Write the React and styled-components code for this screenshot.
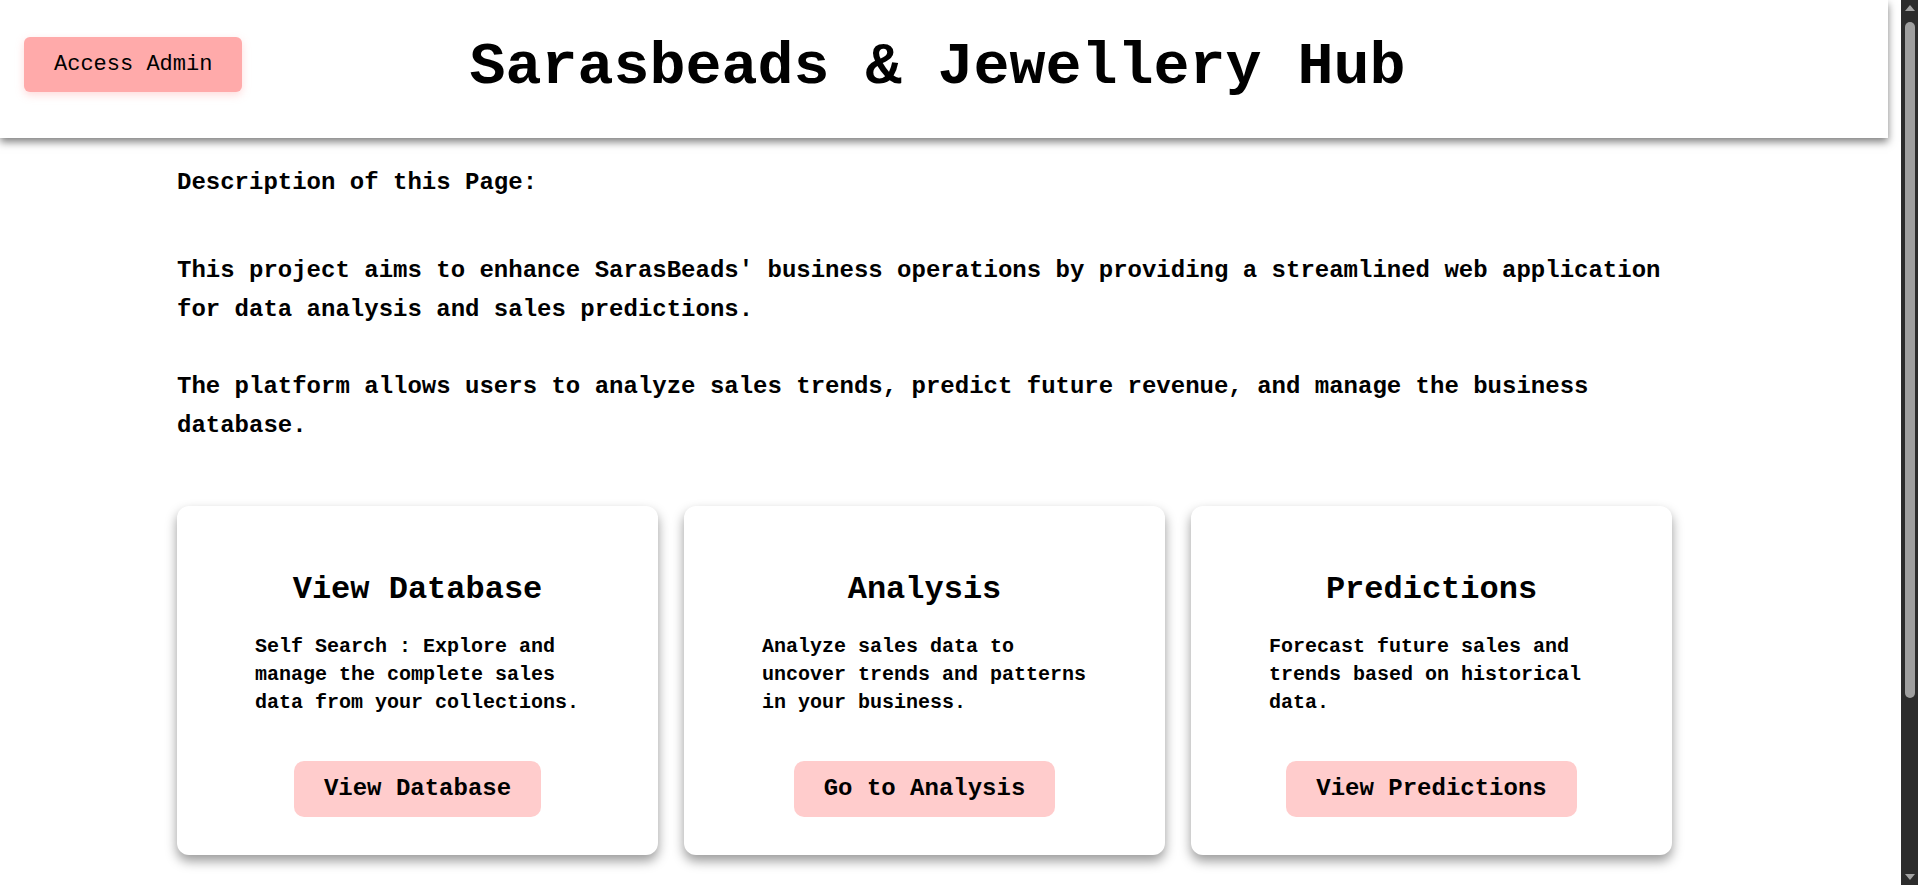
import styled, { createGlobalStyle } from "styled-components";

const GlobalStyle = createGlobalStyle`
  html, body {
    margin: 0;
    padding: 0;
    background: #fff;
  }

  body {
    font-family: "Liberation Mono", "Courier New", monospace;
    color: #000;
  }
`;

const cards = [
  {
    title: "View Database",
    text: "Self Search : Explore and manage the complete sales data from your collections.",
    action: "View Database",
  },
  {
    title: "Analysis",
    text: "Analyze sales data to uncover trends and patterns in your business.",
    action: "Go to Analysis",
  },
  {
    title: "Predictions",
    text: "Forecast future sales and trends based on historical data.",
    action: "View Predictions",
  },
];

function App() {
  return (
    <>
      <GlobalStyle />
      <Header>
        <AdminButton>Access Admin</AdminButton>
        <Title>Sarasbeads &amp; Jewellery Hub</Title>
      </Header>
      <Main>
        <Intro>Description of this Page:</Intro>
        <Paragraph>
          This project aims to enhance SarasBeads' business operations by providing a
          streamlined web application for data analysis and sales predictions.
        </Paragraph>
        <Paragraph>
          The platform allows users to analyze sales trends, predict future revenue, and
          manage the business database.
        </Paragraph>
        <CardGrid>
          {cards.map((card) => (
            <Card key={card.title}>
              <CardTitle>{card.title}</CardTitle>
              <CardText>{card.text}</CardText>
              <CardButton>{card.action}</CardButton>
            </Card>
          ))}
        </CardGrid>
      </Main>
      {/* window scrollbar, drawn since the headless page hides its own */}
      <ScrollTrack>
        <ScrollArrow $up />
        <ScrollThumb />
        <ScrollArrow />
      </ScrollTrack>
    </>
  );
}

const Header = styled.header`
  display: grid;
  grid-template-columns: 1fr auto 1fr;
  align-items: start;
  box-sizing: border-box;
  height: 138px;
  margin-right: 30px;
  padding: 37px 13px 0 0;
  background: #fff;
  box-shadow: 0 4px 8px rgba(0, 0, 0, 0.5);
  position: relative;
  z-index: 1;
`;

const AdminButton = styled.button`
  justify-self: start;
  margin-left: 24px;
  padding: 15px 30px;
  font-family: inherit;
  font-size: 22px;
  line-height: 25px;
  color: #000;
  background: #ffaaaa;
  border: none;
  border-radius: 6px;
  box-shadow: 0 3px 8px rgba(255, 150, 150, 0.35);
  cursor: pointer;
`;

const Title = styled.h1`
  margin: 0;
  font-size: 60px;
  line-height: 60px;
  font-weight: bold;
  white-space: nowrap;
`;

const Main = styled.main`
  width: 1495px;
  margin-left: 177px;
  padding: 26px 0 261px;
`;

const Intro = styled.p`
  margin: 0 0 50px;
  font-size: 24px;
  line-height: 38.4px;
  font-weight: bold;
`;

const Paragraph = styled.p`
  margin: 0 0 39px;
  font-size: 24px;
  line-height: 38.4px;
  font-weight: bold;
`;

const CardGrid = styled.div`
  display: grid;
  grid-template-columns: repeat(3, 1fr);
  gap: 26px;
  margin-top: 61px;
`;

const Card = styled.div`
  display: flex;
  flex-direction: column;
  align-items: center;
  padding: 65px 0 38px;
  background: #fff;
  border-radius: 12px;
  box-shadow: 0 6px 12px rgba(0, 0, 0, 0.4);
`;

const CardTitle = styled.h3`
  margin: 0;
  font-size: 32px;
  line-height: 38.4px;
  font-weight: bold;
`;

const CardText = styled.p`
  width: 325px;
  margin: 24px 0 44px;
  font-size: 20px;
  line-height: 28px;
  font-weight: bold;
`;

const CardButton = styled.button`
  padding: 14px 30px;
  font-family: inherit;
  font-size: 24px;
  line-height: 28px;
  font-weight: bold;
  color: #000;
  background: #ffcccc;
  border: none;
  border-radius: 10px;
  cursor: pointer;
`;

const ScrollTrack = styled.div`
  position: fixed;
  top: 0;
  right: 0;
  width: 17px;
  height: 100vh;
  display: flex;
  flex-direction: column;
  align-items: center;
  background: #2c2c2c;
  z-index: 10;
`;

const ScrollArrow = styled.div`
  flex: none;
  width: 0;
  height: 0;
  margin: ${(p) => (p.$up ? "5px 0 5px" : "auto 0 5px")};
  border-left: 5px solid transparent;
  border-right: 5px solid transparent;
  ${(p) =>
    p.$up ? "border-bottom: 6px solid #a3a3a3;" : "border-top: 6px solid #a3a3a3;"}
`;

const ScrollThumb = styled.div`
  flex: none;
  width: 10px;
  height: 676px;
  margin-top: 6px;
  background: #9f9f9f;
  border-radius: 5px;
`;

export default App;
